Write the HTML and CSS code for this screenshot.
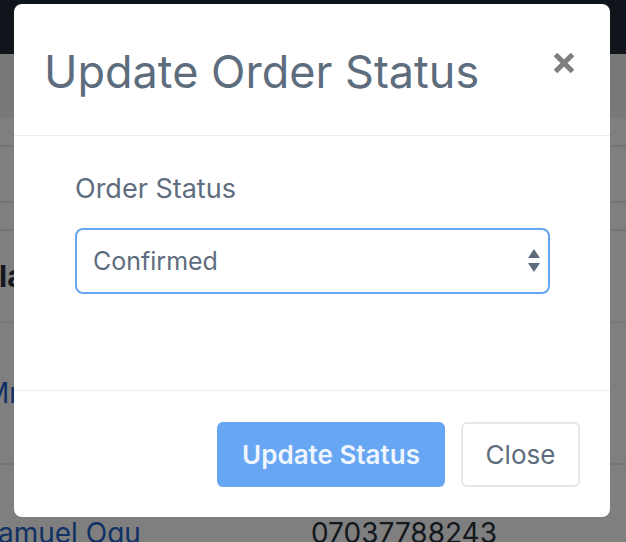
FILE: index.html
```html
<!DOCTYPE html>
<html lang="en">
<head>
<meta charset="utf-8">
<title>Update Order Status</title>
<link rel="stylesheet" href="styles.css">
</head>
<body>
<div class="page">
  <header class="navbar"></header>
  <div class="table">
    <div class="row row-head"></div>
    <div class="row row-a"></div>
    <div class="row row-b"></div>
    <div class="row row-c"></div>
    <div class="row row-d"><span class="cell-bold">Dala</span></div>
    <div class="row row-e"><a class="cell-link">Mr</a></div>
    <div class="row row-f"><a class="cell-link name">Samuel Ogu</a><span class="phone">07037788243</span></div>
  </div>
</div>
<div class="backdrop"></div>
<div class="modal" role="dialog">
  <div class="modal-header">
    <h5 class="modal-title">Update Order Status</h5>
    <button class="close" aria-label="Close">
      <svg width="24" height="24" viewBox="0 0 24 24"><path d="M3.5 3.5 L20.5 20.5 M20.5 3.5 L3.5 20.5" stroke="#7f7f7f" stroke-width="5.2" fill="none"/></svg>
    </button>
  </div>
  <div class="modal-body">
    <label class="label" for="status">Order Status</label>
    <div class="select-wrap">
      <select id="status" class="select">
        <option>Confirmed</option>
        <option>Pending</option>
        <option>Delivered</option>
      </select>
      <svg class="arrows" width="12" height="24" viewBox="0 0 12 24"><path d="M6 0 L12 9 L0 9 Z M0 14 L12 14 L6 23 Z" fill="#5f6e7f"/></svg>
    </div>
  </div>
  <div class="modal-footer">
    <button class="btn btn-primary">Update Status</button>
    <button class="btn btn-secondary">Close</button>
  </div>
</div>
</body>
</html>
```

FILE: styles.css
```css
* { box-sizing: border-box; }
html, body { margin: 0; padding: 0; }
body {
  width: 626px;
  height: 542px;
  overflow: hidden;
  background: #ffffff;
  font-family: Inter, "Noto Sans", Arial, sans-serif;
  position: relative;
}
.page { width: 100%; }
.navbar { height: 54px; background: #212a38; }
.table { display: flex; flex-direction: column; }
.row { border-bottom: 2px solid #e6e6e6; display: flex; align-items: center; }
.row-head { height: 64px; background: #f0f0f0; border-bottom: none; }
.row-a { height: 29px; }
.row-b { height: 56px; }
.row-c { height: 28px; }
.row-d { height: 92px; border-bottom-color: #f2f2f2; }
.row-e { height: 142px; }
.row-f {
  height: 80px;
  border-bottom: none;
  display: grid;
  grid-template-columns: 331px 1fr;
  align-items: start;
  padding-top: 51px;
  margin-left: -20px;
}
.cell-bold { font-weight: 700; font-size: 30px; color: #2b323b; margin-left: -40px; }
.cell-link { color: #1f63c9; font-size: 28px; }
.row-e .cell-link { margin-left: -16px; }
.phone { font-size: 28px; color: #27303a; }

.backdrop { position: absolute; inset: 0; background: rgba(0,0,0,0.5); }

.modal {
  position: absolute;
  left: 14px;
  top: 4px;
  width: 596px;
  background: #fff;
  border-radius: 8px;
  display: flex;
  flex-direction: column;
  color: #5e6d7e;
}
.modal-header {
  height: 132px;
  border-bottom: 1px solid #ececec;
  display: flex;
  align-items: flex-start;
  justify-content: space-between;
  padding: 41px 32px 0 30px;
}
.modal-title {
  margin: 0;
  font-size: 45px;
  font-weight: 400;
  line-height: 54px;
}
.close {
  border: none;
  background: none;
  padding: 0;
  margin: 6px 2px 0 0;
  width: 24px;
  height: 24px;
  display: block;
}
.close svg { display: block; }

.modal-body {
  height: 254px;
  padding: 35px 60px 0 61px;
  display: flex;
  flex-direction: column;
}
.label {
  font-size: 27px;
  line-height: 36px;
  margin-bottom: 21px;
}
.select-wrap { position: relative; }
.select {
  appearance: none;
  -webkit-appearance: none;
  width: 100%;
  height: 66px;
  border: 2px solid #66a6f0;
  border-radius: 8px;
  background: #fff;
  padding: 0 40px 0 16px;
  font-family: inherit;
  font-size: 25px;
  color: #5e6d7e;
  outline: none;
}
.arrows { position: absolute; right: 10px; top: 21px; }

.modal-footer {
  border-top: 1px solid #ececec;
  padding: 31px 30px 30px 0;
  display: flex;
  justify-content: flex-end;
  gap: 16px;
}
.btn {
  height: 65px;
  border-radius: 6px;
  font-family: inherit;
  font-size: 26px;
  padding: 0;
}
.btn-primary {
  width: 228px;
  background: #66a6f2;
  border: none;
  color: #eef5fe;
  font-weight: 600;
}
.btn-secondary {
  width: 119px;
  background: #fff;
  border: 2px solid #e6e7e9;
  color: #5e6d7e;
}
```
